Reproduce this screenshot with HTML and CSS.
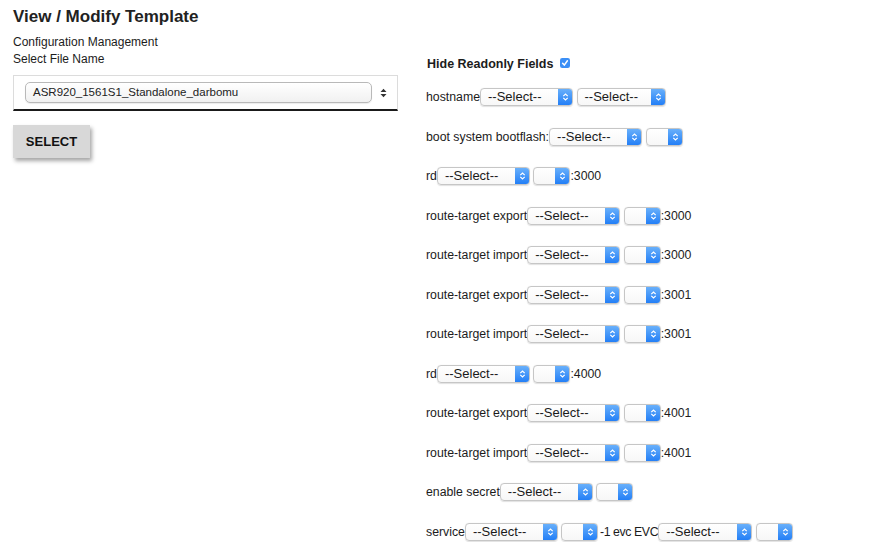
FILE: index.html
```html
<!DOCTYPE html>
<html>
<head>
<meta charset="utf-8">
<title>View / Modify Template</title>
<link rel="stylesheet" href="styles.css">
</head>
<body>
<div class="page">
  <section class="left">
    <h1 class="title">View / Modify Template</h1>
    <div class="line">Configuration Management</div>
    <div class="line">Select File Name</div>
    <div class="file-box">
      <div class="file-select">ASR920_1561S1_Standalone_darbomu</div>
      <svg class="updown" width="7" height="10" viewBox="0 0 7 10"><path d="M0.5 4 L3.5 0.8 L6.5 4 Z M0.5 6 L3.5 9.2 L6.5 6 Z" fill="#333"/></svg>
    </div>
    <button class="select-btn">SELECT</button>
  </section>

  <section class="right">
    <div class="hide-row">Hide Readonly Fields<span class="check"><svg width="10" height="10" viewBox="0 0 10 10"><rect x="0" y="0" width="10" height="10" rx="2.2" fill="#3b8ff6"/><path d="M2.6 5.2 L4.3 7.1 L7.4 2.8" stroke="#fff" stroke-width="1.5" fill="none" stroke-linecap="round" stroke-linejoin="round"/></svg></span></div>

    <div class="row">hostname<span class="sel w93"><span class="sel-text">--Select--</span><span class="sel-btn"><svg width="7" height="10" viewBox="0 0 7 10"><path d="M1.3 4.2 L3.5 2 L5.7 4.2 M1.3 5.8 L3.5 8 L5.7 5.8" stroke="#fff" stroke-width="1.2" fill="none"/></svg></span></span><span class="sel w89 sp"><span class="sel-text">--Select--</span><span class="sel-btn"><svg width="7" height="10" viewBox="0 0 7 10"><path d="M1.3 4.2 L3.5 2 L5.7 4.2 M1.3 5.8 L3.5 8 L5.7 5.8" stroke="#fff" stroke-width="1.2" fill="none"/></svg></span></span></div>

    <div class="row">boot system bootflash:<span class="sel w93"><span class="sel-text">--Select--</span><span class="sel-btn"><svg width="7" height="10" viewBox="0 0 7 10"><path d="M1.3 4.2 L3.5 2 L5.7 4.2 M1.3 5.8 L3.5 8 L5.7 5.8" stroke="#fff" stroke-width="1.2" fill="none"/></svg></span></span><span class="sel w37 sp"><span class="sel-text"></span><span class="sel-btn"><svg width="7" height="10" viewBox="0 0 7 10"><path d="M1.3 4.2 L3.5 2 L5.7 4.2 M1.3 5.8 L3.5 8 L5.7 5.8" stroke="#fff" stroke-width="1.2" fill="none"/></svg></span></span></div>

    <div class="row">rd<span class="sel w93"><span class="sel-text">--Select--</span><span class="sel-btn"><svg width="7" height="10" viewBox="0 0 7 10"><path d="M1.3 4.2 L3.5 2 L5.7 4.2 M1.3 5.8 L3.5 8 L5.7 5.8" stroke="#fff" stroke-width="1.2" fill="none"/></svg></span></span><span class="sel w37 sp"><span class="sel-text"></span><span class="sel-btn"><svg width="7" height="10" viewBox="0 0 7 10"><path d="M1.3 4.2 L3.5 2 L5.7 4.2 M1.3 5.8 L3.5 8 L5.7 5.8" stroke="#fff" stroke-width="1.2" fill="none"/></svg></span></span>:3000</div>

    <div class="row">route-target export<span class="sel w93"><span class="sel-text">--Select--</span><span class="sel-btn"><svg width="7" height="10" viewBox="0 0 7 10"><path d="M1.3 4.2 L3.5 2 L5.7 4.2 M1.3 5.8 L3.5 8 L5.7 5.8" stroke="#fff" stroke-width="1.2" fill="none"/></svg></span></span><span class="sel w37 sp"><span class="sel-text"></span><span class="sel-btn"><svg width="7" height="10" viewBox="0 0 7 10"><path d="M1.3 4.2 L3.5 2 L5.7 4.2 M1.3 5.8 L3.5 8 L5.7 5.8" stroke="#fff" stroke-width="1.2" fill="none"/></svg></span></span>:3000</div>

    <div class="row">route-target import<span class="sel w93"><span class="sel-text">--Select--</span><span class="sel-btn"><svg width="7" height="10" viewBox="0 0 7 10"><path d="M1.3 4.2 L3.5 2 L5.7 4.2 M1.3 5.8 L3.5 8 L5.7 5.8" stroke="#fff" stroke-width="1.2" fill="none"/></svg></span></span><span class="sel w37 sp"><span class="sel-text"></span><span class="sel-btn"><svg width="7" height="10" viewBox="0 0 7 10"><path d="M1.3 4.2 L3.5 2 L5.7 4.2 M1.3 5.8 L3.5 8 L5.7 5.8" stroke="#fff" stroke-width="1.2" fill="none"/></svg></span></span>:3000</div>

    <div class="row">route-target export<span class="sel w93"><span class="sel-text">--Select--</span><span class="sel-btn"><svg width="7" height="10" viewBox="0 0 7 10"><path d="M1.3 4.2 L3.5 2 L5.7 4.2 M1.3 5.8 L3.5 8 L5.7 5.8" stroke="#fff" stroke-width="1.2" fill="none"/></svg></span></span><span class="sel w37 sp"><span class="sel-text"></span><span class="sel-btn"><svg width="7" height="10" viewBox="0 0 7 10"><path d="M1.3 4.2 L3.5 2 L5.7 4.2 M1.3 5.8 L3.5 8 L5.7 5.8" stroke="#fff" stroke-width="1.2" fill="none"/></svg></span></span>:3001</div>

    <div class="row">route-target import<span class="sel w93"><span class="sel-text">--Select--</span><span class="sel-btn"><svg width="7" height="10" viewBox="0 0 7 10"><path d="M1.3 4.2 L3.5 2 L5.7 4.2 M1.3 5.8 L3.5 8 L5.7 5.8" stroke="#fff" stroke-width="1.2" fill="none"/></svg></span></span><span class="sel w37 sp"><span class="sel-text"></span><span class="sel-btn"><svg width="7" height="10" viewBox="0 0 7 10"><path d="M1.3 4.2 L3.5 2 L5.7 4.2 M1.3 5.8 L3.5 8 L5.7 5.8" stroke="#fff" stroke-width="1.2" fill="none"/></svg></span></span>:3001</div>

    <div class="row">rd<span class="sel w93"><span class="sel-text">--Select--</span><span class="sel-btn"><svg width="7" height="10" viewBox="0 0 7 10"><path d="M1.3 4.2 L3.5 2 L5.7 4.2 M1.3 5.8 L3.5 8 L5.7 5.8" stroke="#fff" stroke-width="1.2" fill="none"/></svg></span></span><span class="sel w37 sp"><span class="sel-text"></span><span class="sel-btn"><svg width="7" height="10" viewBox="0 0 7 10"><path d="M1.3 4.2 L3.5 2 L5.7 4.2 M1.3 5.8 L3.5 8 L5.7 5.8" stroke="#fff" stroke-width="1.2" fill="none"/></svg></span></span>:4000</div>

    <div class="row">route-target export<span class="sel w93"><span class="sel-text">--Select--</span><span class="sel-btn"><svg width="7" height="10" viewBox="0 0 7 10"><path d="M1.3 4.2 L3.5 2 L5.7 4.2 M1.3 5.8 L3.5 8 L5.7 5.8" stroke="#fff" stroke-width="1.2" fill="none"/></svg></span></span><span class="sel w37 sp"><span class="sel-text"></span><span class="sel-btn"><svg width="7" height="10" viewBox="0 0 7 10"><path d="M1.3 4.2 L3.5 2 L5.7 4.2 M1.3 5.8 L3.5 8 L5.7 5.8" stroke="#fff" stroke-width="1.2" fill="none"/></svg></span></span>:4001</div>

    <div class="row">route-target import<span class="sel w93"><span class="sel-text">--Select--</span><span class="sel-btn"><svg width="7" height="10" viewBox="0 0 7 10"><path d="M1.3 4.2 L3.5 2 L5.7 4.2 M1.3 5.8 L3.5 8 L5.7 5.8" stroke="#fff" stroke-width="1.2" fill="none"/></svg></span></span><span class="sel w37 sp"><span class="sel-text"></span><span class="sel-btn"><svg width="7" height="10" viewBox="0 0 7 10"><path d="M1.3 4.2 L3.5 2 L5.7 4.2 M1.3 5.8 L3.5 8 L5.7 5.8" stroke="#fff" stroke-width="1.2" fill="none"/></svg></span></span>:4001</div>

    <div class="row">enable secret<span class="sel w93"><span class="sel-text">--Select--</span><span class="sel-btn"><svg width="7" height="10" viewBox="0 0 7 10"><path d="M1.3 4.2 L3.5 2 L5.7 4.2 M1.3 5.8 L3.5 8 L5.7 5.8" stroke="#fff" stroke-width="1.2" fill="none"/></svg></span></span><span class="sel w37 sp"><span class="sel-text"></span><span class="sel-btn"><svg width="7" height="10" viewBox="0 0 7 10"><path d="M1.3 4.2 L3.5 2 L5.7 4.2 M1.3 5.8 L3.5 8 L5.7 5.8" stroke="#fff" stroke-width="1.2" fill="none"/></svg></span></span></div>

    <div class="row">service<span class="sel w93"><span class="sel-text">--Select--</span><span class="sel-btn"><svg width="7" height="10" viewBox="0 0 7 10"><path d="M1.3 4.2 L3.5 2 L5.7 4.2 M1.3 5.8 L3.5 8 L5.7 5.8" stroke="#fff" stroke-width="1.2" fill="none"/></svg></span></span><span class="sel w37 sp"><span class="sel-text"></span><span class="sel-btn"><svg width="7" height="10" viewBox="0 0 7 10"><path d="M1.3 4.2 L3.5 2 L5.7 4.2 M1.3 5.8 L3.5 8 L5.7 5.8" stroke="#fff" stroke-width="1.2" fill="none"/></svg></span></span><span class="mid">-1 evc EVC</span><span class="sel w94"><span class="sel-text">--Select--</span><span class="sel-btn"><svg width="7" height="10" viewBox="0 0 7 10"><path d="M1.3 4.2 L3.5 2 L5.7 4.2 M1.3 5.8 L3.5 8 L5.7 5.8" stroke="#fff" stroke-width="1.2" fill="none"/></svg></span></span><span class="sel w37 sp"><span class="sel-text"></span><span class="sel-btn"><svg width="7" height="10" viewBox="0 0 7 10"><path d="M1.3 4.2 L3.5 2 L5.7 4.2 M1.3 5.8 L3.5 8 L5.7 5.8" stroke="#fff" stroke-width="1.2" fill="none"/></svg></span></span></div>
  </section>
</div>
</body>
</html>
```

FILE: styles.css
```css
html, body {
  margin: 0;
  padding: 0;
  background: #ffffff;
}

body {
  font-family: "Liberation Sans", Arial, sans-serif;
  color: #1c1c1c;
  font-size: 12px;
}

.page {
  display: flex;
  align-items: flex-start;
  padding-left: 13px;
  gap: 28px;
}

.left {
  width: 385px;
  display: flex;
  flex-direction: column;
  align-items: flex-start;
}

.title {
  margin: 5px 0 0 0;
  font-size: 17px;
  line-height: 24px;
  font-weight: bold;
  color: #222;
}

.line {
  font-size: 12px;
  line-height: 17px;
}

.title + .line {
  margin-top: 5px;
}

.file-box {
  margin-top: 7px;
  box-sizing: border-box;
  width: 385px;
  height: 36px;
  border: 1px solid #dcdcdc;
  border-bottom: 2px solid #1a1a1a;
  display: flex;
  align-items: center;
  padding-left: 11px;
}

.file-select {
  box-sizing: border-box;
  width: 347px;
  height: 21px;
  border: 1px solid #b9b9b9;
  border-radius: 5px;
  background: linear-gradient(#ffffff, #f1f1f1);
  box-shadow: 0 1px 1px rgba(0, 0, 0, 0.08);
  font-size: 11.5px;
  line-height: 19px;
  padding-left: 7px;
  color: #222;
}

.updown {
  margin-left: 8px;
}

.select-btn {
  margin-top: 14px;
  width: 77px;
  height: 33px;
  border: none;
  background: #d8d8d8;
  box-shadow: 2px 3px 4px rgba(0, 0, 0, 0.35);
  font-family: "Liberation Sans", Arial, sans-serif;
  font-weight: bold;
  font-size: 13px;
  color: #111;
  padding: 0;
}

.right {
  display: flex;
  flex-direction: column;
  gap: 19.5px;
  padding-top: 55.5px;
}

.hide-row {
  font-weight: bold;
  font-size: 12.5px;
  line-height: 17px;
  display: flex;
  align-items: center;
  padding-left: 1px;
  margin-bottom: -5px;
}

.check {
  display: inline-flex;
  margin-left: 7px;
  margin-top: -2px;
}

.row {
  display: flex;
  align-items: center;
  height: 20px;
  line-height: 20px;
  font-size: 12.3px;
  white-space: nowrap;
}

.sel {
  box-sizing: border-box;
  display: inline-flex;
  height: 18px;
  border: 1px solid #c6c6c6;
  border-radius: 4px;
  background: linear-gradient(#ffffff, #f7f7f7);
  box-shadow: 0 0.5px 1px rgba(0, 0, 0, 0.12);
  overflow: hidden;
}

.sel.sp {
  margin-left: 3.5px;
}

.w93 { width: 93px; }
.w94 { width: 94px; }
.w89 { width: 89px; }
.w37 { width: 37px; }

.sel-text {
  flex: 1;
  font-size: 13px;
  line-height: 16px;
  padding-left: 7px;
  color: #1a1a1a;
}

.sel-btn {
  width: 15px;
  display: flex;
  align-items: center;
  justify-content: center;
  background: linear-gradient(#6db3fb, #1f7cf6);
  margin: -1px -1px -1px 0;
  height: 18px;
  border-radius: 0 4px 4px 0;
}

.mid {
  margin-left: 1.5px;
  letter-spacing: -0.4px;
}
```
